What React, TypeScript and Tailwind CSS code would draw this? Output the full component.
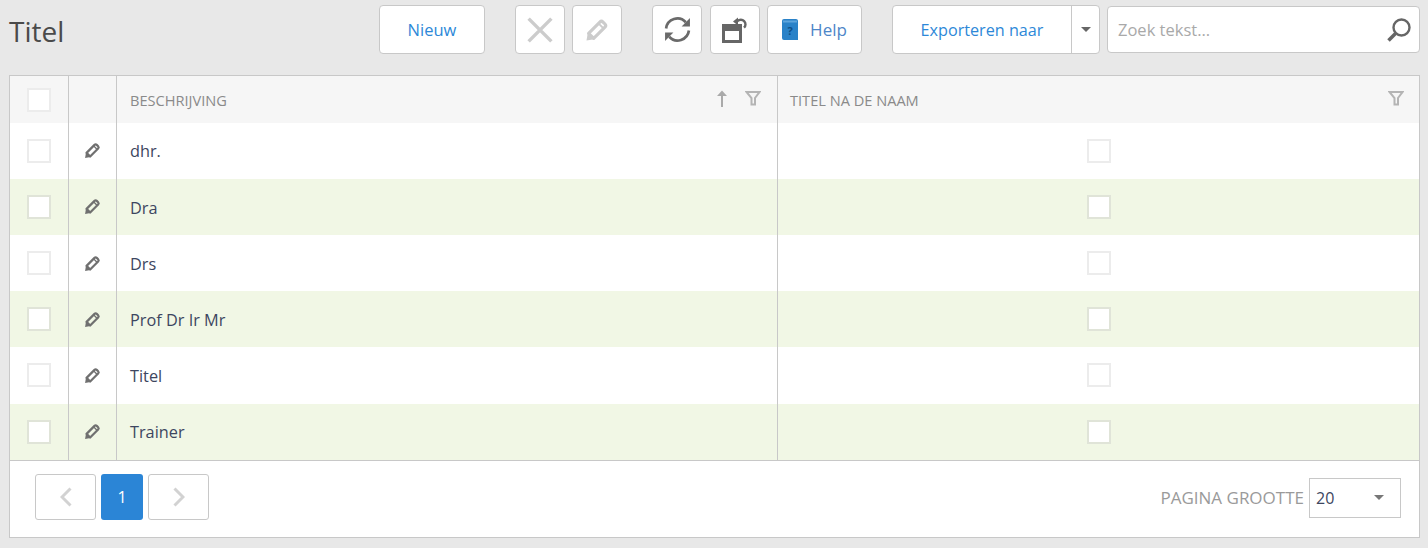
const rows = ['dhr.', 'Dra', 'Drs', 'Prof Dr Ir Mr', 'Titel', 'Trainer'];

function Pencil({ className }: { className?: string }) {
  return (
    <svg viewBox="0 0 16 16" className={className} fill="none" stroke="currentColor" strokeWidth="2.1">
      <path d="M2.4 10.2 9.9 2.7a1.5 1.5 0 0 1 2.1 0l1.3 1.3a1.5 1.5 0 0 1 0 2.1L5.8 13.6Z" strokeLinejoin="round" />
      <path d="M9 3.6l3.4 3.4" strokeWidth="1.2" />
      <path d="M1 15l.9-5.2 4.3 4.3Z" fill="currentColor" stroke="none" />
    </svg>
  );
}

function Funnel() {
  return (
    <svg viewBox="0 0 16 16" className="w-[16px] h-[16px] text-[#b4b4b4]" fill="none" stroke="currentColor" strokeWidth="2">
      <path d="M1.5 2h13L10 8v6.5H6.5V8Z" strokeLinejoin="miter" />
    </svg>
  );
}

function Check({ tinted }: { tinted?: boolean }) {
  return (
    <span className={`block w-6 h-6 bg-white border-2 ${tinted ? 'border-[#e0e4d8]' : 'border-[#ececec]'}`} />
  );
}

function ToolButton({ className, children }: { className?: string; children: React.ReactNode }) {
  return (
    <button className={`h-[49px] flex items-center justify-center bg-white border border-[#c8c8c8] rounded-[4px] text-[#2d88d8] text-[16.5px] ${className ?? ''}`}>
      {children}
    </button>
  );
}

export default function App() {
  return (
    <div className="w-[1428px] h-[548px] bg-[#e8e8e8] px-[9px] overflow-hidden font-['Open_Sans',sans-serif]">
      {/* Toolbar */}
      <div className="h-[75px] flex items-start">
        <h1 className="text-[28px] leading-[38px] mt-[12px] text-[#4a4a4a] w-[370px] shrink-0">Titel</h1>
        <div className="flex pt-[5px]">
          <ToolButton className="w-[106px] pt-[2px]">Nieuw</ToolButton>
          <ToolButton className="w-[50px] ml-[30px]">
            <svg viewBox="0 0 24 24" className="w-[26px] h-[26px] text-[#cccccc]" fill="none" stroke="currentColor" strokeWidth="3.2">
              <path d="M1.5 1.5 22.5 22.5M22.5 1.5 1.5 22.5" />
            </svg>
          </ToolButton>
          <ToolButton className="w-[50px] ml-[7px]">
            <Pencil className="w-[24px] h-[24px] text-[#cccccc]" />
          </ToolButton>
          <ToolButton className="w-[50px] ml-[30px]">
            <svg viewBox="0 0 26 26" className="w-[27px] h-[27px] text-[#6a6a6a]" fill="none" stroke="currentColor" strokeWidth="2.6">
              <path d="M2 12A11 11 0 0 1 21 6" />
              <path d="M24 14A11 11 0 0 1 5 20" />
              <path d="M25 2v8h-8Z" fill="currentColor" stroke="none" />
              <path d="M1 24v-8h8Z" fill="currentColor" stroke="none" />
            </svg>
          </ToolButton>
          <ToolButton className="w-[50px] ml-[8px]">
            <svg viewBox="0 0 28 26" className="w-[28px] h-[26px] text-[#666666]" fill="currentColor">
              <path d="M1 7h20v19H1Zm3 7v9h14v-9Z" fillRule="evenodd" />
              <path d="M16.5 4.2a4.6 4.6 0 1 1 6.5 6.5" fill="none" stroke="#ffffff" strokeWidth="5" />
              <path d="M16.5 4.2a4.6 4.6 0 1 1 6.5 6.5" fill="none" stroke="currentColor" strokeWidth="2.4" />
              <path d="M12 4.5 17 0.5v8Z" />
            </svg>
          </ToolButton>
          <ToolButton className="w-[95px] ml-[7px] gap-[12px]">
            <svg viewBox="0 0 16 21" className="w-[16px] h-[21px]">
              <path d="M0 2a2 2 0 0 1 2-2h12a2 2 0 0 1 2 2v19H2a2 2 0 0 1-2-2Z" fill="#2a82c8" />
              <path d="M1 1.5h14v2H1Z" fill="#5ea5dc" />
              <text x="8" y="16" textAnchor="middle" fontSize="11" fontWeight="700" fill="#0f4f86">?</text>
            </svg>
            <span className="text-[#4d86c8] text-[17px]">Help</span>
          </ToolButton>
          <div className="h-[49px] w-[208px] ml-[30px] flex bg-white border border-[#c8c8c8] rounded-[4px]">
            <span className="flex-1 flex items-center justify-center pt-[2px] text-[#2d88d8] text-[16.2px] border-r border-[#c8c8c8]">
              Exporteren naar
            </span>
            <span className="w-[27px] flex items-center justify-center">
              <span className="border-x-[5px] border-x-transparent border-t-[5px] border-t-[#666666]" />
            </span>
          </div>
          <div className="h-[47px] w-[313px] ml-[7px] mt-[1px] px-[10px] flex items-center justify-between bg-white border border-[#c8c8c8] rounded-[4px]">
            <span className="text-[16.5px] text-[#a9a9a9] pt-[1px]">Zoek tekst...</span>
            <svg viewBox="0 0 26 26" className="w-[26px] h-[26px] -mr-[3px] text-[#666666]" fill="none" stroke="currentColor">
              <circle cx="15.5" cy="10.5" r="8" strokeWidth="2.4" />
              <path d="M9.5 16.5 2.5 23.5" strokeWidth="3.6" />
            </svg>
          </div>
        </div>
      </div>

      {/* Grid */}
      <div className="w-[1411px] h-[463px] bg-white border border-[#c8c8c8] flex flex-col">
        <div className="h-[46.6px] bg-[#f6f6f6] flex items-stretch text-[14.6px] text-[#8a8a8a]">
          <div className="w-[59px] border-r border-[#c8c8c8] flex items-center justify-center pt-[1px]">
            <Check />
          </div>
          <div className="w-[48px] border-r border-[#c8c8c8]" />
          <div className="w-[661px] border-r border-[#c8c8c8] flex items-center pl-[13px] pr-[16px]">
            <span className="flex-1 mt-[3px]">BESCHRIJVING</span>
            <svg viewBox="0 0 12 18" className="w-[12px] h-[18px] mr-[17px] -mt-[1px] text-[#aaaaaa]" fill="none" stroke="currentColor" strokeWidth="2">
              <path d="M6 17V3" />
              <path d="M6 0.5 11 6H1Z" fill="currentColor" stroke="none" />
            </svg>
            <span className="-mt-[2px]"><Funnel /></span>
          </div>
          <div className="flex-1 flex items-center pl-[12px] pr-[15px]">
            <span className="flex-1 mt-[3px]">TITEL NA DE NAAM</span>
            <span className="-mt-[2px]"><Funnel /></span>
          </div>
        </div>
        {rows.map((name, i) => {
          const tinted = i % 2 === 1;
          return (
            <div key={name} className={`h-[56.2px] flex items-stretch text-[16.3px] ${tinted ? 'bg-[#f1f7e5]' : 'bg-white'}`}>
              <div className="w-[59px] border-r border-[#c8c8c8] flex items-center justify-center">
                <Check tinted={tinted} />
              </div>
              <div className="w-[48px] border-r border-[#c8c8c8] flex items-center justify-center pr-[1px]">
                <Pencil className="w-[17px] h-[17px] text-[#707070]" />
              </div>
              <div className="w-[661px] border-r border-[#c8c8c8] flex items-center pl-[13px] pt-[2px] text-[#3d4660]">{name}</div>
              <div className="flex-1 flex items-center justify-center">
                <Check tinted={tinted} />
              </div>
            </div>
          );
        })}
        <div className="flex-1 border-t border-[#c8c8c8] flex items-center pl-[25px] pr-[18px] pb-[4px]">
          <button className="w-[61px] h-[46px] border border-[#c8c8c8] rounded-[3px] flex items-center justify-center">
            <svg viewBox="0 0 12 20" className="w-[12px] h-[20px] text-[#d2d2d2]" fill="none" stroke="currentColor" strokeWidth="3"><path d="M10.5 1.5 2 10l8.5 8.5" /></svg>
          </button>
          <button className="w-[42px] h-[46px] ml-[5px] bg-[#2b85d6] rounded-[3px] text-white text-[16px]">1</button>
          <button className="w-[61px] h-[46px] ml-[5px] border border-[#c8c8c8] rounded-[3px] flex items-center justify-center">
            <svg viewBox="0 0 12 20" className="w-[12px] h-[20px] text-[#d2d2d2]" fill="none" stroke="currentColor" strokeWidth="3"><path d="M1.5 1.5 10 10l-8.5 8.5" /></svg>
          </button>
          <span className="ml-auto mt-[2px] text-[17px] text-[#9a9a9a]">PAGINA GROOTTE</span>
          <div className="w-[92px] h-[40px] ml-[5px] mt-[2px] border border-[#c8c8c8] flex items-center justify-between pl-[6px] pr-[16px] text-[16px] text-[#3d4660]">
            20
            <span className="border-x-[5px] border-x-transparent border-t-[5px] border-t-[#777777]" />
          </div>
        </div>
      </div>
    </div>
  );
}
